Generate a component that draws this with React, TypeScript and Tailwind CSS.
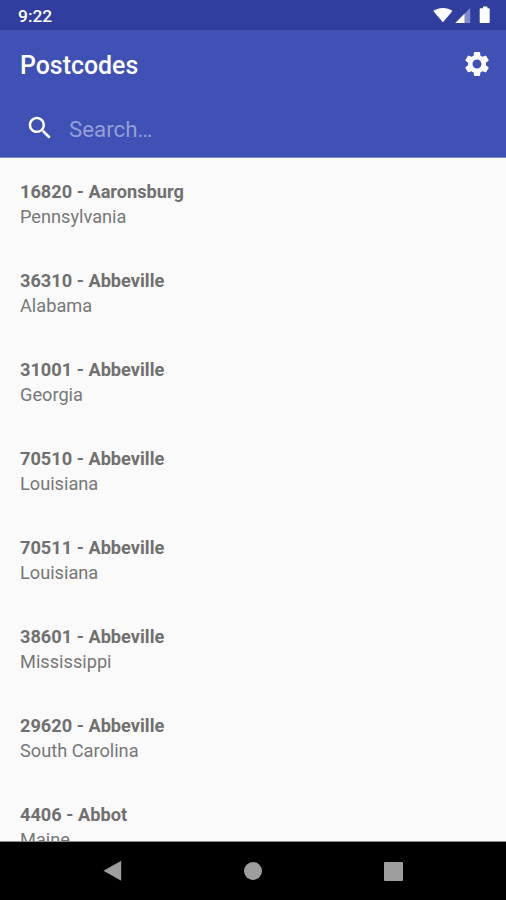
import React from 'react';

interface Postcode {
  code: string;
  city: string;
  state: string;
}

const postcodes: Postcode[] = [
  { code: '16820', city: 'Aaronsburg', state: 'Pennsylvania' },
  { code: '36310', city: 'Abbeville', state: 'Alabama' },
  { code: '31001', city: 'Abbeville', state: 'Georgia' },
  { code: '70510', city: 'Abbeville', state: 'Louisiana' },
  { code: '70511', city: 'Abbeville', state: 'Louisiana' },
  { code: '38601', city: 'Abbeville', state: 'Mississippi' },
  { code: '29620', city: 'Abbeville', state: 'South Carolina' },
  { code: '4406', city: 'Abbot', state: 'Maine' },
];

const StatusBar: React.FC = () => (
  <div className="h-[30px] shrink-0 bg-[#303f9f] flex items-center justify-between pl-[18px] pr-[15px] text-white">
    <span className="text-[17.4px] font-medium leading-[30px] pt-[2px]">9:22</span>
    <svg viewBox="0 0 58 18" fill="currentColor" className="w-[58px] h-[18px]">
      <path d="M0.3 4.9C5.5 0.9 14.3 0.9 19.5 4.9L9.9 16.2Z" />
      <path opacity="0.4" d="M37.2 2V17H22.3Z" />
      <path d="M31.5 7.700V17H22.3Z" />
      <path d="M47.7 2.3H50V0.6h4.4v1.7h1.300c.6 0 1 .4 1 1V16c0 .6-.4 1-1 1H47.700c-.6 0-1-.4-1-1V3.300c0-.6.4-1 1-1Z" />
    </svg>
  </div>
);

const Header: React.FC = () => (
  <header className="h-32 shrink-0 bg-[#3f51b5] text-white border-b border-[#7f8bc9]">
    <div className="h-[70px] flex items-center justify-between pl-5 pr-[14px]">
      <h1 className="text-[24.9px] font-medium leading-8 pt-[2px]">Postcodes</h1>
      <button aria-label="Settings" className="-mt-[2px]">
        <svg viewBox="0 0 24 24" fill="currentColor" className="w-[30px] h-[30px]">
          <path d="M19.140 12.940c.04-.3.06-.61.06-.94 0-.32-.02-.64-.07-.94l2.030-1.580c.18-.14.23-.41.12-.61l-1.920-3.320c-.12-.22-.37-.29-.59-.22l-2.390.96c-.5-.38-1.030-.7-1.620-.94l-.36-2.540c-.04-.24-.24-.41-.48-.41h-3.840c-.24 0-.43.17-.47.41l-.36 2.540c-.59.24-1.130.57-1.620.94l-2.390-.96c-.22-.08-.47 0-.59.22L2.740 8.870c-.12.21-.08.47.12.61l2.030 1.580c-.05.3-.09.63-.09.94s.02.64.07.94l-2.030 1.580c-.18.14-.23.41-.12.61l1.920 3.320c.12.22.37.29.59.22l2.390-.96c.5.38 1.030.7 1.620.94l.36 2.540c.05.24.24.41.48.41h3.840c.24 0 .44-.17.47-.41l.36-2.540c.59-.24 1.130-.56 1.620-.94l2.390.96c.22.08.47 0 .59-.22l1.920-3.320c.12-.22.07-.47-.12-.61l-2.010-1.580zM12 15.600c-1.980 0-3.600-1.620-3.600-3.600s1.620-3.600 3.600-3.600 3.600 1.620 3.600 3.600-1.620 3.600-3.600 3.600z" />
        </svg>
      </button>
    </div>
    <div className="h-[57px] flex items-center pl-[25px]">
      <svg viewBox="0 0 24 24" fill="currentColor" className="w-[30px] h-[30px] -mt-[2px]">
        <path d="M15.500 14h-.79l-.28-.27C15.410 12.590 16 11.110 16 9.500 16 5.910 13.090 3 9.500 3S3 5.910 3 9.500 5.910 16 9.500 16c1.610 0 3.090-.59 4.230-1.570l.27.28v.79l5 4.990L20.490 19l-4.990-5zm-6 0C7.010 14 5 11.990 5 9.500S7.010 5 9.500 5 14 7.010 14 9.500 11.990 14 9.500 14z" />
      </svg>
      <span className="ml-[14px] text-[22.3px] leading-7 text-[#929fd8]">Search…</span>
    </div>
  </header>
);

const PostcodeRow: React.FC<{ item: Postcode }> = ({ item }) => (
  <li className="h-[89px] shrink-0 pl-5 pt-[21px] text-[#707070]">
    <p className="text-[18.2px] leading-[25px] font-bold">{item.code} - {item.city}</p>
    <p className="text-[18.2px] leading-[25px] text-[#777777]">{item.state}</p>
  </li>
);

const NavigationBar: React.FC = () => (
  <nav className="h-[59px] shrink-0 bg-black border-t border-[#8a8a8a] text-[#9e9e9e] flex items-center justify-center">
    <div className="w-[140px] flex justify-center">
      <svg viewBox="0 0 20 22" fill="currentColor" className="w-5 h-[22px]">
        <path d="M18.2 0.8V20.8L0.5 10.8Z" />
      </svg>
    </div>
    <div className="w-[140px] flex justify-center">
      <div className="w-[18px] h-[18px] rounded-full bg-[#9e9e9e]" />
    </div>
    <div className="w-[140px] flex justify-center">
      <div className="w-[19px] h-[19px] rounded-[1px] bg-[#9e9e9e]" />
    </div>
  </nav>
);

const App: React.FC = () => {
  return (
    <div className="w-full h-[900px] flex flex-col overflow-hidden bg-[#fafafa] font-[Roboto,sans-serif]">
      <StatusBar />
      <Header />
      <ul className="flex-1 min-h-0 flex flex-col overflow-hidden">
        {postcodes.map((item) => (
          <PostcodeRow key={item.code} item={item} />
        ))}
      </ul>
      <NavigationBar />
    </div>
  );
};

export default App;
